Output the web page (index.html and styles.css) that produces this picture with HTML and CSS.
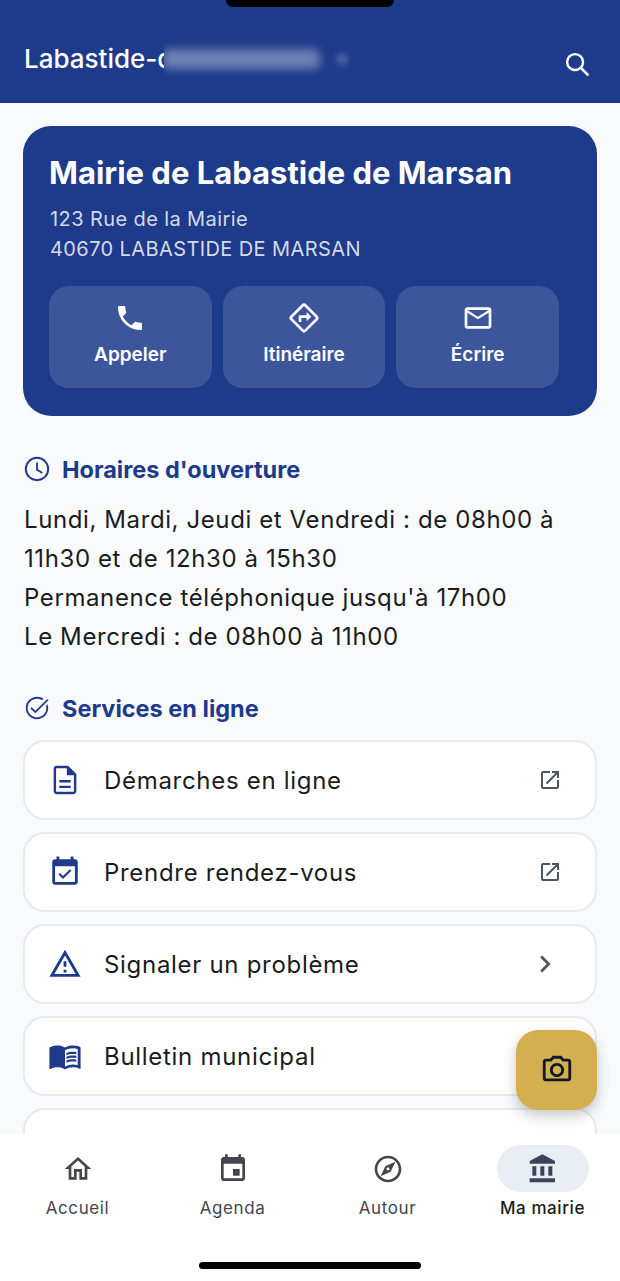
FILE: index.html
```html
<!DOCTYPE html>
<html lang="fr">

<head>
    <meta charset="UTF-8">
    <meta name="viewport" content="width=device-width, initial-scale=1.0">
    <title>Ma mairie</title>
    <link rel="stylesheet" href="styles.css">
</head>

<body>
    <div class="notch"></div>
    <header class="topbar">
        <div class="topbar-title">
            <span>Labastide-d</span>
            <span class="blur-mask"><i class="blob-text"></i><i class="blob-dot"></i></span>
        </div>
        <svg class="icon-search" viewBox="0 0 24 24"><circle cx="10" cy="10" r="6.6" fill="none" stroke="currentColor" stroke-width="2"/><path d="M15 15l6 6" fill="none" stroke="currentColor" stroke-width="2.2"/></svg>
    </header>

    <main class="content">
        <section class="card">
            <h1>Mairie de Labastide de Marsan</h1>
            <p class="address">123 Rue de la Mairie<br>40670 LABASTIDE DE MARSAN</p>
            <div class="actions">
                <a class="action">
                    <svg viewBox="0 0 24 24"><path d="M6.62 10.79c1.44 2.83 3.76 5.14 6.59 6.59l2.2-2.2c.27-.27.67-.36 1.02-.24 1.12.37 2.33.57 3.57.57.55 0 1 .45 1 1V20c0 .55-.45 1-1 1-9.39 0-17-7.61-17-17 0-.55.45-1 1-1h3.5c.55 0 1 .45 1 1 0 1.25.2 2.45.57 3.57.11.35.03.74-.25 1.02l-2.2 2.2z"/></svg>
                    <span>Appeler</span>
                </a>
                <a class="action">
                    <svg viewBox="0 0 24 24"><path d="M22.43 10.59l-9.01-9.01c-.75-.75-2.07-.76-2.83 0l-9 9c-.78.78-.78 2.04 0 2.82l9 9c.39.39.9.58 1.41.58.51 0 1.02-.19 1.41-.58l8.99-8.99c.79-.76.8-2.02.03-2.82zm-10.42 10.4l-9-9 9-9 9 9-9 9zM8 11v4h2v-3h4v2.5l3.5-3.5L14 7.5V10H9c-.55 0-1 .45-1 1z"/></svg>
                    <span>Itinéraire</span>
                </a>
                <a class="action">
                    <svg viewBox="0 0 24 24"><path d="M20 4H4c-1.1 0-1.99.9-1.99 2L2 18c0 1.1.9 2 2 2h16c1.1 0 2-.9 2-2V6c0-1.1-.9-2-2-2zm0 14H4V8l8 5 8-5v10zm-8-7L4 6h16l-8 5z"/></svg>
                    <span>Écrire</span>
                </a>
            </div>
        </section>

        <h2 class="section-title">
            <svg viewBox="0 0 24 24"><circle cx="12" cy="12" r="9.6" fill="none" stroke="currentColor" stroke-width="1.7"/><path d="M12 6.5V12.6l4.6 2.8" fill="none" stroke="currentColor" stroke-width="1.6"/></svg>
            Horaires d'ouverture
        </h2>
        <p class="hours">Lundi, Mardi, Jeudi et Vendredi : de 08h00 à 11h30 et de 12h30 à 15h30<br>Permanence téléphonique jusqu'à 17h00<br>Le Mercredi : de 08h00 à 11h00</p>

        <h2 class="section-title section-services">
            <svg viewBox="0 0 24 24"><path d="M22 5.18L10.59 16.6l-4.24-4.24 1.1-1.1 3.14 3.14 10-10L22 5.18zm-2.21 5.04c.13.57.21 1.17.21 1.78 0 4.42-3.58 8-8 8s-8-3.58-8-8 3.58-8 8-8c1.58 0 3.04.46 4.28 1.25l1.14-1.14C16.1 2.97 14.13 2.4 12 2.4 6.7 2.4 2.4 6.7 2.4 12s4.3 9.6 9.6 9.6 9.6-4.3 9.6-9.6c0-1.19-.22-2.23-.6-3.29l-1.21 1.51z"/></svg>
            Services en ligne
        </h2>
        <ul class="services">
            <li class="service">
                <svg class="service-icon" viewBox="0 0 24 24"><path d="M8 16h8v1.7H8zm0-4h8v1.7H8zM14 2H6c-1.1 0-2 .9-2 2v16c0 1.1.89 2 1.99 2H18c1.1 0 2-.9 2-2V8l-6-6zm4.300 18c0 .2-.1.3-.3.3H6c-.2 0-.3-.1-.3-.3V4c0-.2.1-.3.3-.3h7.300v5h5z"/><path d="M14 2l6 6h-6z"/></svg>
                <span class="service-label">Démarches en ligne</span>
                <svg class="service-link" viewBox="0 0 24 24"><path d="M19 19H5V5h7V3H5c-1.11 0-2 .9-2 2v14c0 1.1.89 2 2 2h14c1.1 0 2-.9 2-2v-7h-2v7zM14 3v2h3.590l-9.830 9.830 1.410 1.410L19 6.410V10h2V3h-7z"/></svg>
            </li>
            <li class="service">
                <svg class="service-icon" viewBox="0 0 24 24"><path d="M16.53 11.06L15.47 10l-4.88 4.88-2.12-2.12-1.06 1.06L10.59 17l5.94-5.94zM19 3h-1V1h-2v2H8V1H6v2H5c-1.11 0-1.99.9-1.99 2L3 19c0 1.1.89 2 2 2h14c1.1 0 2-.9 2-2V5c0-1.1-.9-2-2-2zm0 16H5V8h14v11z"/></svg>
                <span class="service-label">Prendre rendez-vous</span>
                <svg class="service-link" viewBox="0 0 24 24"><path d="M19 19H5V5h7V3H5c-1.11 0-2 .9-2 2v14c0 1.1.89 2 2 2h14c1.1 0 2-.9 2-2v-7h-2v7zM14 3v2h3.590l-9.830 9.830 1.410 1.410L19 6.410V10h2V3h-7z"/></svg>
            </li>
            <li class="service">
                <svg class="service-icon" viewBox="0 0 24 24"><path d="M12 5.99L19.53 19H4.470L12 5.990M12 2L1 21h22L12 2zm1 14h-2v2h2v-2zm0-6h-2v4h2v-4z"/></svg>
                <span class="service-label">Signaler un problème</span>
                <svg class="service-chevron" viewBox="0 0 24 24"><path d="M10 6L8.590 7.410 13.170 12l-4.580 4.590L10 18l6-6z"/></svg>
            </li>
            <li class="service">
                <svg class="service-icon" viewBox="0 0 24 24"><path d="M21 5c-1.11-.35-2.33-.5-3.5-.5-1.95 0-4.05.4-5.5 1.5-1.45-1.1-3.55-1.500-5.5-1.500S2.450 4.900 1 6v14.650c0 .25.25.5.5.5.1 0 .15-.05.25-.05C3.100 20.450 5.050 20 6.500 20c1.950 0 4.050.4 5.500 1.500 1.350-.85 3.800-1.500 5.500-1.500 1.650 0 3.350.3 4.750 1.050.1.05.15.05.25.05.25 0 .5-.25.5-.5V6c-.6-.45-1.250-.75-2-1zm0 13.500c-1.100-.35-2.300-.5-3.500-.5-1.700 0-4.150.65-5.500 1.500V8c1.350-.85 3.800-1.500 5.500-1.500 1.200 0 2.400.15 3.500.5v11.500z"/><path d="M17.500 10.500c.88 0 1.730.09 2.500.26V9.240c-.79-.15-1.640-.24-2.500-.24-1.700 0-3.240.29-4.500.83v1.660c1.130-.64 2.700-.99 4.500-.99zM13 12.490v1.660c1.130-.64 2.700-.99 4.500-.99.88 0 1.730.09 2.500.26V11.900c-.79-.15-1.640-.24-2.500-.24-1.700 0-3.240.3-4.500.83zM17.500 14.330c-1.700 0-3.240.29-4.500.83v1.660c1.130-.64 2.700-.99 4.500-.99.88 0 1.730.09 2.500.26v-1.520c-.79-.16-1.640-.24-2.500-.24z"/></svg>
                <span class="service-label">Bulletin municipal</span>
            </li>
            <li class="service"></li>
        </ul>
    </main>

    <button class="fab">
        <svg viewBox="0 0 24 24"><path d="M14.120 4l1.830 2H20v12H4V6h4.050l1.830-2h4.240M15 2H9L7.170 4H4c-1.100 0-2 .9-2 2v12c0 1.100.9 2 2 2h16c1.100 0 2-.9 2-2V6c0-1.100-.9-2-2-2h-3.170L15 2zm-3 7c1.650 0 3 1.350 3 3s-1.350 3-3 3-3-1.350-3-3 1.350-3 3-3m0-2c-2.760 0-5 2.240-5 5s2.240 5 5 5 5-2.240 5-5-2.240-5-5-5z"/></svg>
    </button>

    <nav class="tabbar">
        <a class="tab">
            <span class="tab-icon"><svg viewBox="0 0 24 24"><path d="M12 5.690l5 4.500V18h-2v-6H9v6H7v-7.810l5-4.500M12 3L2 12h3v8h6v-6h2v6h6v-8h3L12 3z"/></svg></span>
            <span>Accueil</span>
        </a>
        <a class="tab">
            <span class="tab-icon"><svg viewBox="0 0 24 24"><path d="M17 12h-5v5h5v-5zM16 1v2H8V1H6v2H5c-1.110 0-1.990.9-1.990 2L3 19c0 1.100.89 2 2 2h14c1.100 0 2-.9 2-2V5c0-1.100-.9-2-2-2h-1V1h-2zm3 18H5V8h14v11z"/></svg></span>
            <span>Agenda</span>
        </a>
        <a class="tab">
            <span class="tab-icon"><svg viewBox="0 0 24 24"><path d="M12 2C6.480 2 2 6.480 2 12s4.480 10 10 10 10-4.480 10-10S17.520 2 12 2zm0 18c-4.410 0-8-3.590-8-8s3.590-8 8-8 8 3.590 8 8-3.590 8-8 8zm-5.500-2.500l7.510-3.490L17.500 6.500 9.990 9.990 6.500 17.500zm5.500-6.600c.61 0 1.100.49 1.100 1.100s-.49 1.100-1.100 1.100-1.100-.49-1.100-1.100.49-1.100 1.100-1.100z"/></svg></span>
            <span>Autour</span>
        </a>
        <a class="tab tab-active">
            <span class="tab-icon"><svg viewBox="0 0 24 24"><path d="M4 10v7h3v-7H4zm6 0v7h3v-7h-3zM2 22h19v-3H2v3zm14-12v7h3v-7h-3zm-4.500-9L2 6v2h19V6l-9.500-5z"/></svg></span>
            <span>Ma mairie</span>
        </a>
    </nav>
    <div class="home-indicator"></div>
</body>

</html>
```

FILE: styles.css
```css
* {
    box-sizing: border-box;
}

body {
    margin: 0;
    height: 100vh;
    display: flex;
    flex-direction: column;
    overflow: hidden;
    position: relative;
    font-family: Inter, "Liberation Sans", sans-serif;
    background-color: #f8fafc;
    color: #1a1c20;
}

svg {
    fill: currentColor;
    flex-shrink: 0;
    display: block;
}

/* Phone chrome */
.notch {
    position: absolute;
    top: 0;
    left: 226px;
    width: 168px;
    height: 7px;
    background-color: #000;
    border-radius: 0 0 12px 12px;
}

.home-indicator {
    position: absolute;
    left: 199px;
    top: 1262px;
    width: 222px;
    height: 7px;
    border-radius: 4px;
    background-color: #000;
}

/* Header */
.topbar {
    flex: 0 0 103px;
    display: flex;
    align-items: flex-end;
    justify-content: space-between;
    padding: 0 28px 24px 24px;
    background-color: #1e3a8a;
    color: #fff;
}

.topbar-title {
    display: flex;
    align-items: center;
    font-size: 26px;
    font-weight: 500;
    line-height: 32px;
}

.blur-mask {
    display: flex;
    align-items: center;
    width: 200px;
    height: 40px;
    margin-left: -9px;
    margin-right: -40px;
    overflow: hidden;
    background-color: #1e3a8a;
}

.blob-text {
    width: 158px;
    height: 20px;
    margin-left: -2px;
    background-color: rgba(255, 255, 255, 0.36);
    border-radius: 6px;
    filter: blur(5px);
}

.blob-dot {
    width: 12px;
    height: 12px;
    margin-left: 16px;
    border-radius: 50%;
    background-color: rgba(255, 255, 255, 0.22);
    filter: blur(3px);
}

.icon-search {
    width: 29px;
    height: 29px;
    margin-bottom: 0;
}

/* Content */
.content {
    flex: 1;
    min-height: 0;
    overflow: hidden;
    padding: 23px 23px 0;
}

.card {
    height: 290px;
    padding: 26px 38px 26px 26px;
    border-radius: 28px;
    background-color: #1e3a8a;
    color: #fff;
}

.card h1 {
    margin: 0;
    font-size: 31px;
    font-weight: 700;
    line-height: 42px;
    white-space: nowrap;
}

.address {
    margin: 10px 0 0 1px;
    font-size: 20px;
    line-height: 30px;
    letter-spacing: 0.4px;
    color: rgba(255, 255, 255, 0.82);
}

.actions {
    display: flex;
    gap: 11px;
    margin-top: 22px;
}

.action {
    flex: 1;
    height: 102px;
    display: flex;
    flex-direction: column;
    align-items: center;
    padding-top: 16px;
    gap: 9px;
    border-radius: 20px;
    background-color: rgba(255, 255, 255, 0.14);
    font-size: 19px;
    font-weight: 600;
    line-height: 24px;
}

.action svg {
    width: 32px;
    height: 32px;
}

.section-title {
    display: flex;
    align-items: center;
    gap: 11px;
    height: 32px;
    margin: 37px 0 0;
    font-size: 23.500px;
    font-weight: 700;
    color: #1e3a8a;
}

.section-title svg {
    width: 28px;
    height: 28px;
}

.hours {
    margin: 15px 0 0 1px;
    font-size: 24px;
    line-height: 39px;
    letter-spacing: 0.6px;
}

.section-services {
    margin-top: 36px;
}

/* Services list */
.services {
    list-style-type: none;
    display: flex;
    flex-direction: column;
    gap: 12px;
    margin: 16px 0 0;
    padding: 0;
}

.service {
    flex: 0 0 80px;
    display: flex;
    align-items: center;
    padding: 0 33px 0 23px;
    border: 2px solid #e6ebf2;
    border-radius: 22px;
    background-color: #fff;
}

.service-icon {
    width: 34px;
    height: 34px;
    color: #1e3a8a;
}

.service-label {
    flex: 1;
    margin-left: 22px;
    font-size: 24px;
    letter-spacing: 0.7px;
}

.service-link {
    width: 24px;
    height: 24px;
    color: #4b5563;
}

.service-chevron {
    width: 34px;
    height: 34px;
    color: #4b5563;
}

.fab {
    position: absolute;
    left: 516px;
    top: 1030px;
    width: 81px;
    height: 80px;
    display: flex;
    align-items: center;
    justify-content: center;
    padding: 0;
    border: none;
    border-radius: 22px;
    background-color: #d4af4f;
    color: #111827;
    box-shadow: 0 6px 14px rgba(0, 0, 0, 0.22);
}

.fab svg {
    width: 34px;
    height: 34px;
}

/* Bottom tabs */
.tabbar {
    position: absolute;
    left: 0;
    right: 0;
    top: 1134px;
    height: 147px;
    display: grid;
    grid-template-columns: repeat(4, 155px);
    background-color: #fff;
}

.tab {
    display: flex;
    flex-direction: column;
    align-items: center;
    padding-top: 11px;
    font-size: 17px;
    line-height: 24px;
    letter-spacing: 0.6px;
    color: #44464c;
}

.tab-icon {
    width: 92px;
    height: 47px;
    display: flex;
    align-items: center;
    justify-content: center;
    border-radius: 24px;
    margin-bottom: 4px;
}

.tab-icon svg {
    width: 32px;
    height: 32px;
}

.tab-active {
    color: #1a1c20;
    font-weight: 500;
}

.tab-active .tab-icon {
    background-color: #e9edf4;
    color: #3b4459;
}
```
